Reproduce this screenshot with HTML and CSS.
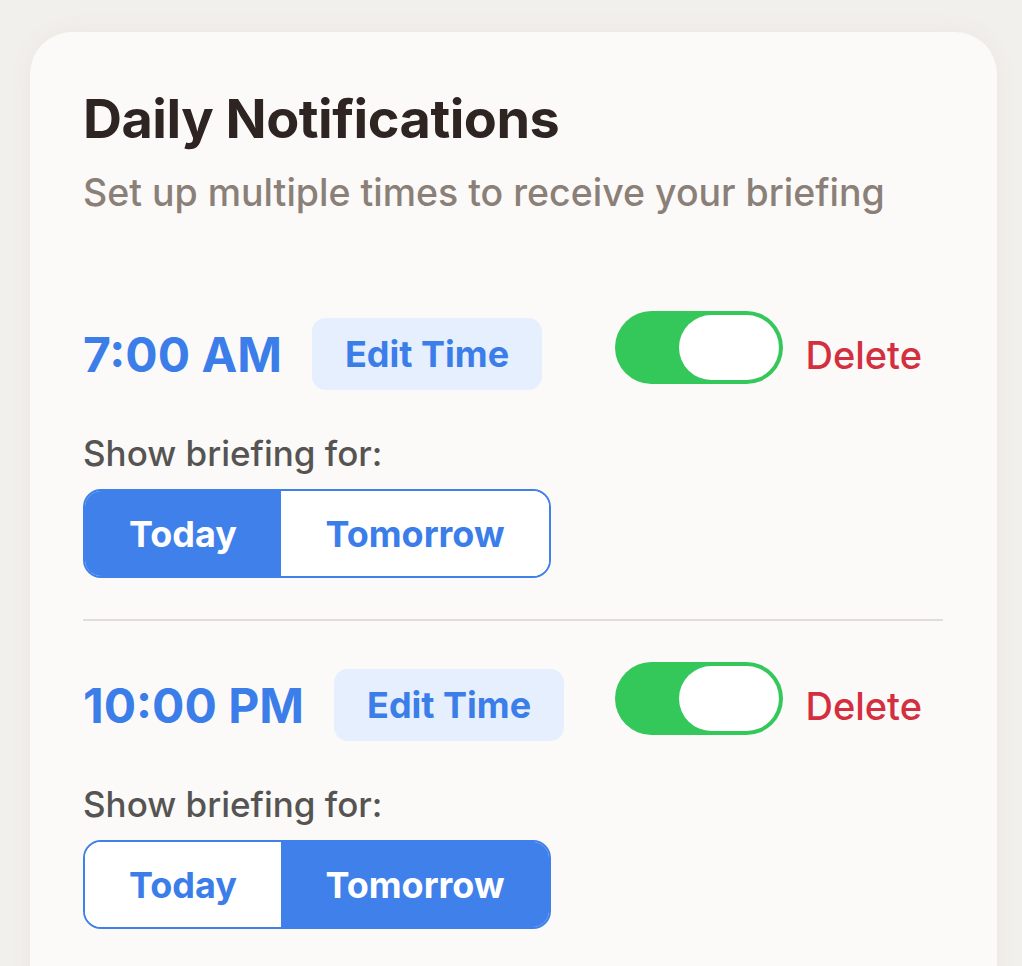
FILE: index.html
```html
<!DOCTYPE html>
<html lang="en">
<head>
  <meta charset="UTF-8">
  <meta name="viewport" content="width=device-width, initial-scale=1.0">
  <title>Daily Notifications</title>
  <link rel="stylesheet" href="styles.css">
</head>
<body>
  <div class="card">
    <h1>Daily Notifications</h1>
    <p class="subtitle">Set up multiple times to receive your briefing</p>

    <div class="alarm first">
      <div class="alarm-row">
        <div class="time-group">
          <span class="time">7:00 AM</span>
          <button class="edit-button">Edit Time</button>
        </div>
        <div class="action-group">
          <span class="toggle on"><span class="knob"></span></span>
          <button class="delete-button">Delete</button>
        </div>
      </div>
      <div class="label">Show briefing for:</div>
      <div class="segment">
        <button class="seg active">Today</button>
        <button class="seg">Tomorrow</button>
      </div>
    </div>

    <div class="divider"></div>

    <div class="alarm">
      <div class="alarm-row">
        <div class="time-group">
          <span class="time">10:00 PM</span>
          <button class="edit-button">Edit Time</button>
        </div>
        <div class="action-group">
          <span class="toggle on"><span class="knob"></span></span>
          <button class="delete-button">Delete</button>
        </div>
      </div>
      <div class="label">Show briefing for:</div>
      <div class="segment">
        <button class="seg">Today</button>
        <button class="seg active">Tomorrow</button>
      </div>
    </div>
  </div>
</body>
</html>
```

FILE: styles.css
```css
/* page */
body {
  margin: 0;
  font-family: Inter, "Noto Sans", sans-serif;
  background-color: #f2f0ec;
  overflow: hidden;
}

.card {
  margin: 32px 25px 0 30px;
  padding: 55px 54px 60px 53px;
  background-color: #fbfaf8;
  border-radius: 42px;
  min-height: 900px;
  box-shadow: 0 0 24px rgba(120, 100, 80, 0.06);
}

h1 {
  margin: 0;
  font-size: 54px;
  line-height: 64px;
  font-weight: 700;
  color: #2e2522;
  letter-spacing: -0.5px;
}

.subtitle {
  margin: 20px 0 0 0;
  font-size: 37.5px;
  line-height: 44px;
  font-weight: 500;
  color: #8b8078;
}

/* one alarm */
.alarm-row {
  display: flex;
  justify-content: space-between;
  align-items: flex-start;
  padding-right: 21px;
}

.alarm.first .alarm-row {
  margin-top: 96px;
}

.time-group {
  display: flex;
  align-items: center;
  gap: 30px;
  margin-top: 7px;
}

.time {
  font-size: 48px;
  font-weight: 700;
  color: #3b7de9;
}

button {
  font-family: inherit;
  border: none;
  cursor: pointer;
}

.edit-button {
  height: 72px;
  padding: 0 33px;
  background-color: #e5effd;
  color: #3b7de9;
  font-size: 36px;
  font-weight: 700;
  border-radius: 14px;
}

.action-group {
  display: flex;
  align-items: center;
  gap: 22px;
}

.toggle {
  display: flex;
  align-items: center;
  justify-content: flex-end;
  width: 168px;
  height: 73px;
  box-sizing: border-box;
  padding: 4px;
  border-radius: 37px;
  background-color: #34c759;
}

.knob {
  width: 100px;
  height: 65px;
  border-radius: 33px;
  background-color: #fff;
}

.delete-button {
  padding: 0;
  background: none;
  color: #d32f3f;
  font-size: 38px;
  font-weight: 500;
  margin-top: 14px;
}

.label {
  margin-top: 43px;
  font-size: 35px;
  line-height: 40px;
  font-weight: 500;
  color: #565453;
}

.segment {
  display: flex;
  width: 468px;
  height: 89px;
  margin-top: 16px;
  box-sizing: border-box;
  border: 2px solid #3f80ea;
  border-radius: 18px;
  overflow: hidden;
  background-color: #fff;
}

.seg {
  background-color: #fff;
  color: #3b7de9;
  font-size: 36px;
  font-weight: 700;
}

.seg:first-child {
  width: 196px;
}

.seg:last-child {
  flex: 1;
}

.seg.active {
  background-color: #3f80ea;
  color: #fff;
}

.divider {
  height: 2px;
  background-color: #e0dcd7;
  margin: 41px 0 41px 0;
}
```
